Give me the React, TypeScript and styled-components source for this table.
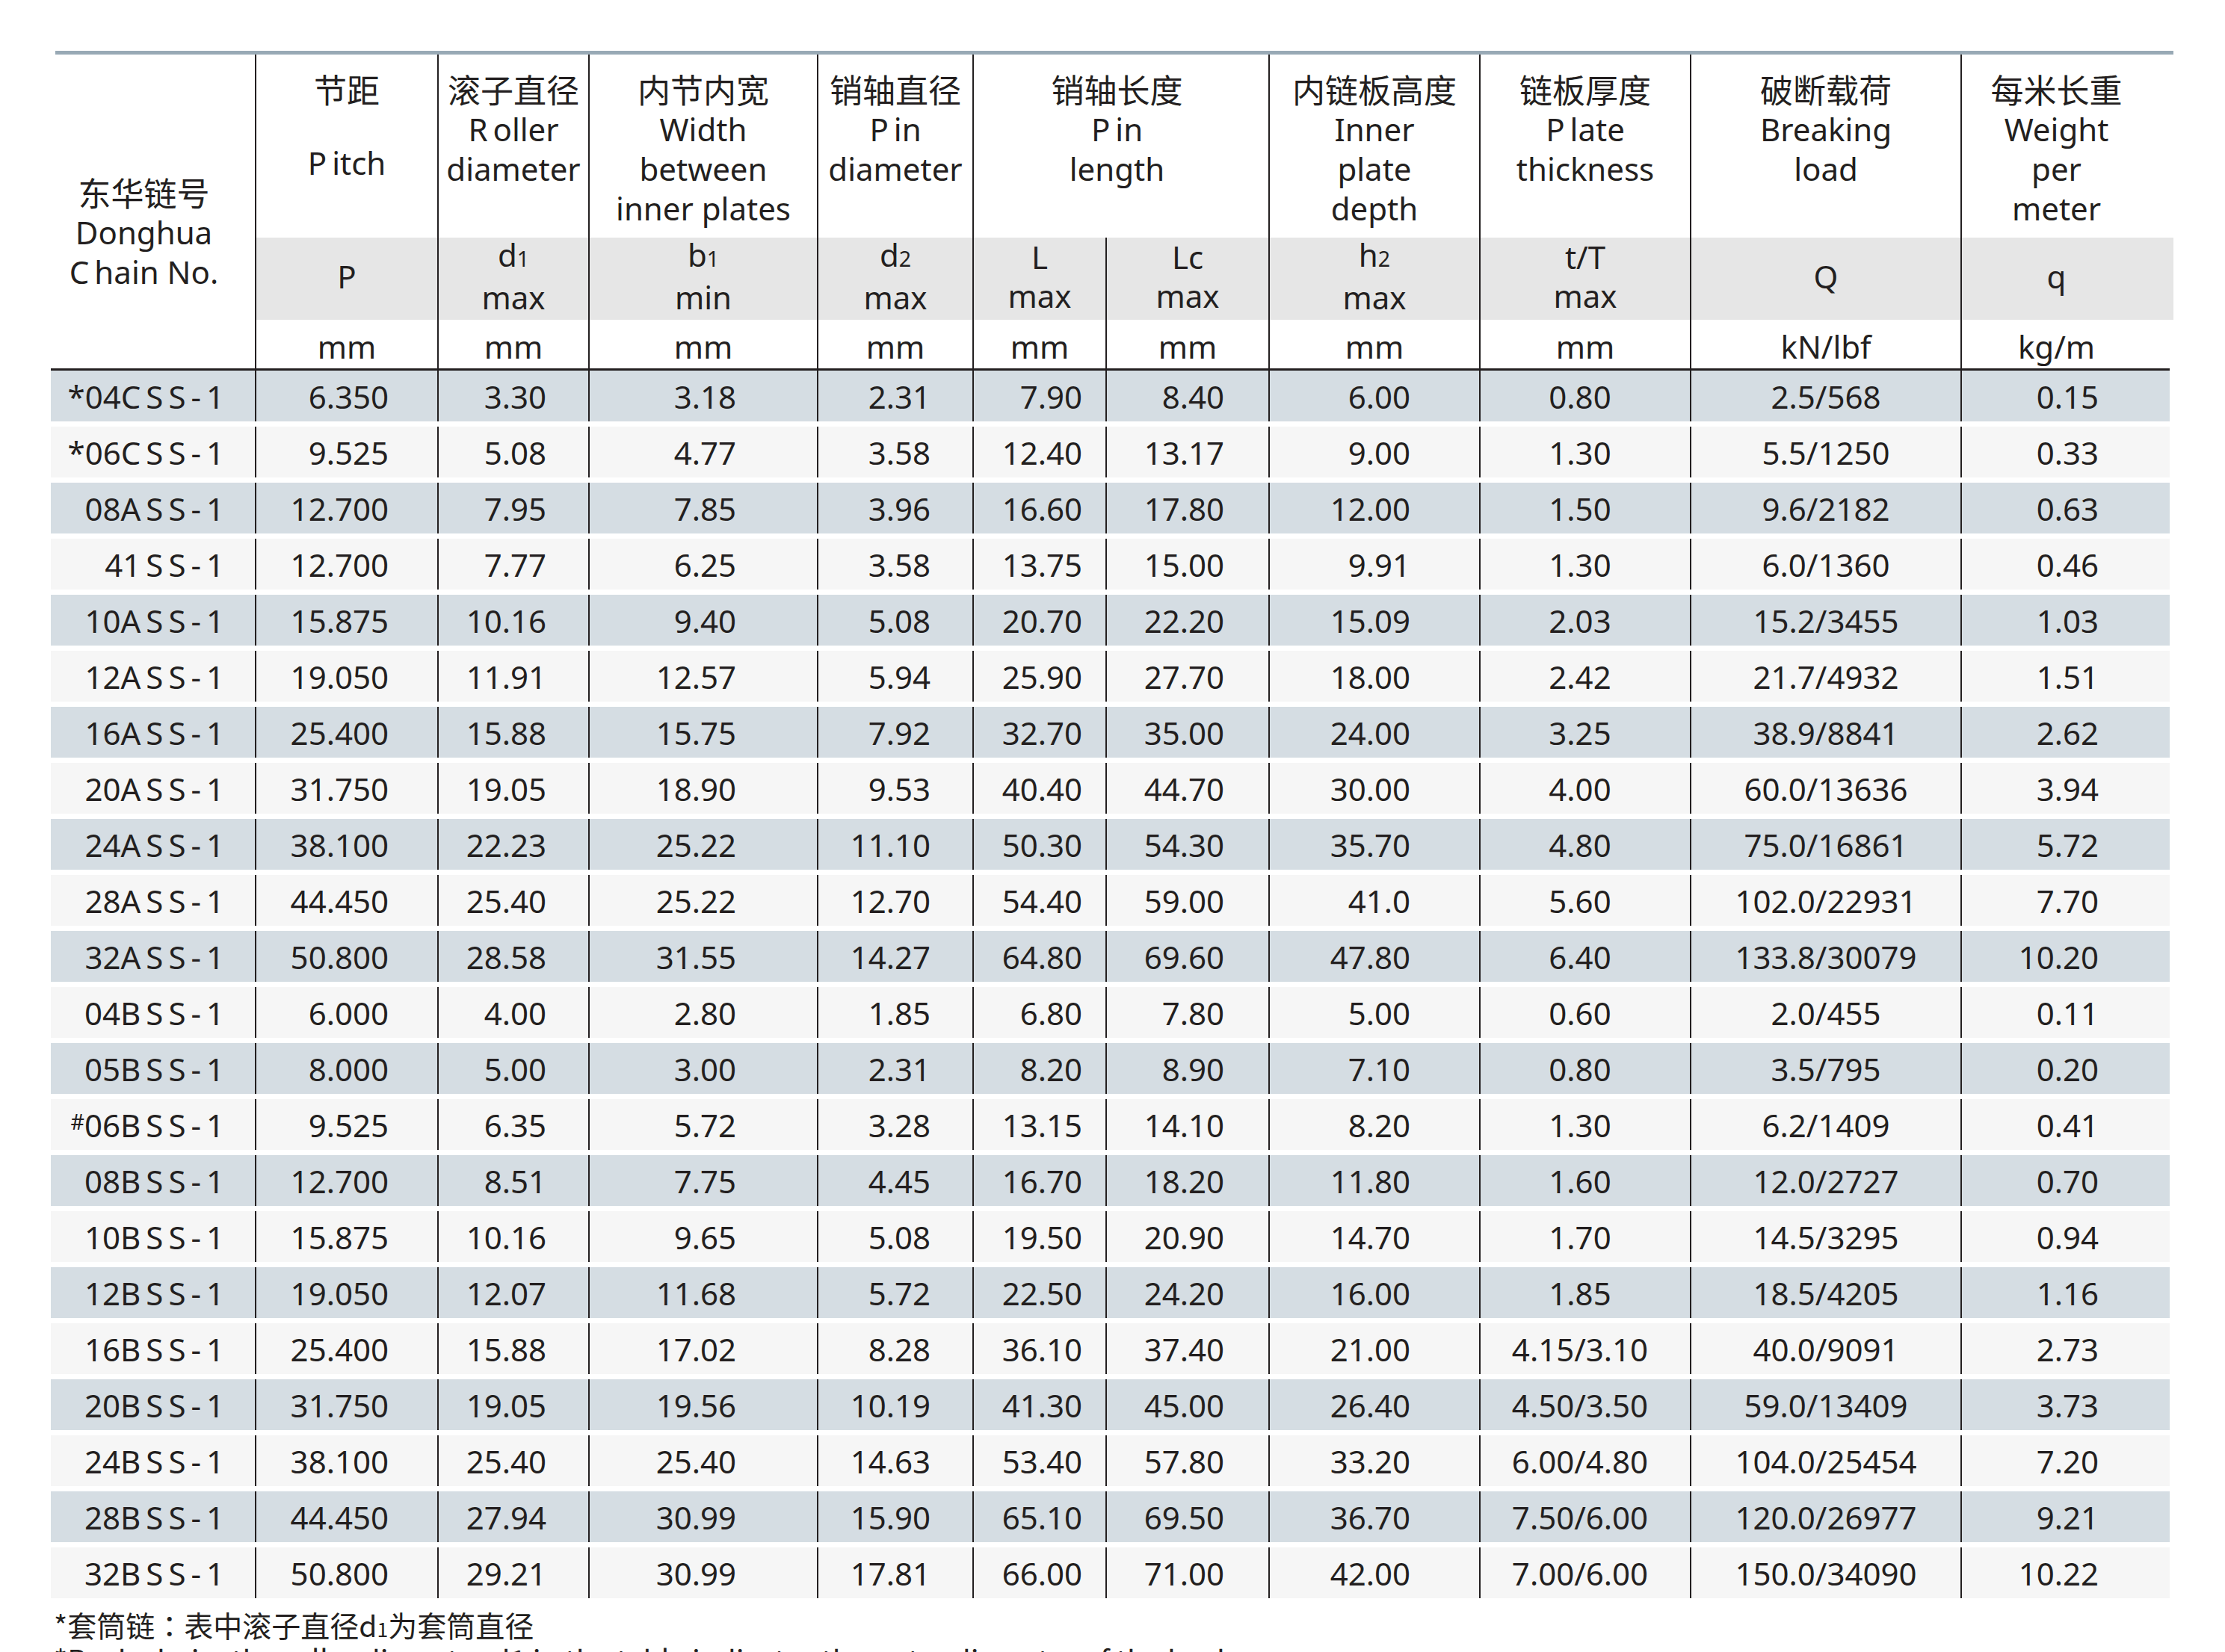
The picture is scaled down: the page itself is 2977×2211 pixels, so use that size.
import React from 'react';
import styled, { createGlobalStyle } from 'styled-components';

const GlobalStyle = createGlobalStyle`
  html, body {
    margin: 0;
    padding: 0;
    background: #fff;
    overflow: hidden;
  }
  body {
    font-family: "Noto Sans", "Noto Sans CJK SC", sans-serif;
    color: #231f20;
  }
`;

const BODY_COLS = '273px 244px 202px 306px 208px 178px 218px 282px 282px 362px 280px';
const HEAD_COLS = '273px 244px 202px 306px 208px 178px 218px 282px 282px 362px 285px';

const Page = styled.div`
  padding: 68px 0 0 68px;
  width: 2909px;
`;

const TopRule = styled.div`
  height: 5px;
  margin-left: 6px;
  width: 2834px;
  background: #98a9b5;
`;

const HeadGrid = styled.div`
  display: grid;
  grid-template-columns: ${HEAD_COLS};
  grid-template-rows: 245px 110px 65px;
  font-size: 42px;
  line-height: 53px;

  & > :nth-child(10),
  & > :nth-child(20),
  & > :nth-child(30) {
    padding-right: 30px;
  }
`;

const ChainHead = styled.div`
  grid-column: 1;
  grid-row: 1 / 4;
  padding: 158px 24px 0 0;
  text-align: center;
  line-height: 53px;
`;

const TitleCell = styled.div<{ $span?: number; $shift?: number }>`
  grid-column: span ${(p) => p.$span ?? 1};
  border-left: 2px solid #231f20;
  padding-top: 20px;
  padding-right: ${(p) => p.$shift ?? 0}px;
  text-align: center;
`;

const Zh = styled.div`
  font-family: "Noto Sans CJK SC", sans-serif;
  font-size: 44px;
`;

const Line = styled.div<{ $drop?: number }>`
  margin-top: ${(p) => p.$drop ?? 0}px;
  white-space: nowrap;
`;

const Lead = styled.span`
  margin-right: 7px;
`;

const SymbolCell = styled.div`
  border-left: 2px solid #231f20;
  background: #e6e6e6;
  display: flex;
  flex-direction: column;
  justify-content: center;
  align-items: center;
  line-height: 52px;
  padding-bottom: 7px;
`;

const UnitCell = styled.div`
  border-left: 2px solid #231f20;
  padding-top: 9px;
  text-align: center;
`;

const Sub = styled.span`
  font-size: 0.68em;
`;

const Sup = styled.span`
  font-size: 0.68em;
  vertical-align: 0.35em;
`;

const BlackRule = styled.div`
  height: 3px;
  width: 2835px;
  background: #231f20;
`;

const Row = styled.div<{ $bg: string }>`
  display: grid;
  grid-template-columns: ${BODY_COLS};
  height: 75px;
  width: 2835px;
  background: linear-gradient(to bottom, ${(p) => p.$bg} 0, ${(p) => p.$bg} 68px, #fff 68px);
  font-size: 42px;

  &:last-child {
    height: 72px;
  }
`;

const Cell = styled.div<{ $align: 'right' | 'center'; $pad: number; $first?: boolean }>`
  border-left: ${(p) => (p.$first ? 'none' : '2px solid #231f20')};
  height: 68px;
  display: flex;
  align-items: center;
  justify-content: ${(p) => (p.$align === 'right' ? 'flex-end' : 'center')};
  padding-right: ${(p) => p.$pad}px;
  box-sizing: border-box;
  white-space: nowrap;
`;

const Spaced = styled.span`
  margin-left: 7px;
  letter-spacing: 7px;
`;

const Notes = styled.div`
  margin: 11px 0 0 4px;
  font-family: "Noto Sans CJK SC", sans-serif;
  font-size: 39px;
  line-height: 40px;
  white-space: nowrap;
`;

const Colon = styled.span`
  font-family: "Noto Sans CJK TC", sans-serif;
`;

type ColAlign = { align: 'right' | 'center'; pad: number };

const DATA_ALIGN: ColAlign[] = [
  { align: 'right', pad: 41 },
  { align: 'right', pad: 65 },
  { align: 'right', pad: 56 },
  { align: 'right', pad: 108 },
  { align: 'right', pad: 56 },
  { align: 'right', pad: 31 },
  { align: 'right', pad: 59 },
  { align: 'right', pad: 92 },
  { align: 'center', pad: 14 },
  { align: 'center', pad: 0 },
  { align: 'right', pad: 95 },
];

type Title = { zh: string; en: string[]; lead?: boolean[]; span?: number; drop?: number; shift?: number };

const TITLES: Title[] = [
  { zh: '节距', en: ['Pitch'], lead: [true], drop: 45 },
  { zh: '滚子直径', en: ['Roller', 'diameter'], lead: [true] },
  { zh: '内节内宽', en: ['Width', 'between', 'inner plates'] },
  { zh: '销轴直径', en: ['Pin', 'diameter'], lead: [true] },
  { zh: '销轴长度', en: ['Pin', 'length'], lead: [true], span: 2, shift: 11 },
  { zh: '内链板高度', en: ['Inner', 'plate', 'depth'] },
  { zh: '链板厚度', en: ['Plate', 'thickness'], lead: [true] },
  { zh: '破断载荷', en: ['Breaking', 'load'] },
  { zh: '每米长重', en: ['Weight', 'per', 'meter'] },
];

const SYMBOLS: React.ReactNode[][] = [
  ['P'],
  [<>d<Sub>1</Sub></>, 'max'],
  [<>b<Sub>1</Sub></>, 'min'],
  [<>d<Sub>2</Sub></>, 'max'],
  ['L', 'max'],
  ['Lc', 'max'],
  [<>h<Sub>2</Sub></>, 'max'],
  ['t/T', 'max'],
  ['Q'],
  ['q'],
];

const UNITS = ['mm', 'mm', 'mm', 'mm', 'mm', 'mm', 'mm', 'mm', 'kN/lbf', 'kg/m'];

const ROWS: string[][] = [
  ['*04C', '6.350', '3.30', '3.18', '2.31', '7.90', '8.40', '6.00', '0.80', '2.5/568', '0.15'],
  ['*06C', '9.525', '5.08', '4.77', '3.58', '12.40', '13.17', '9.00', '1.30', '5.5/1250', '0.33'],
  ['08A', '12.700', '7.95', '7.85', '3.96', '16.60', '17.80', '12.00', '1.50', '9.6/2182', '0.63'],
  ['41', '12.700', '7.77', '6.25', '3.58', '13.75', '15.00', '9.91', '1.30', '6.0/1360', '0.46'],
  ['10A', '15.875', '10.16', '9.40', '5.08', '20.70', '22.20', '15.09', '2.03', '15.2/3455', '1.03'],
  ['12A', '19.050', '11.91', '12.57', '5.94', '25.90', '27.70', '18.00', '2.42', '21.7/4932', '1.51'],
  ['16A', '25.400', '15.88', '15.75', '7.92', '32.70', '35.00', '24.00', '3.25', '38.9/8841', '2.62'],
  ['20A', '31.750', '19.05', '18.90', '9.53', '40.40', '44.70', '30.00', '4.00', '60.0/13636', '3.94'],
  ['24A', '38.100', '22.23', '25.22', '11.10', '50.30', '54.30', '35.70', '4.80', '75.0/16861', '5.72'],
  ['28A', '44.450', '25.40', '25.22', '12.70', '54.40', '59.00', '41.0', '5.60', '102.0/22931', '7.70'],
  ['32A', '50.800', '28.58', '31.55', '14.27', '64.80', '69.60', '47.80', '6.40', '133.8/30079', '10.20'],
  ['04B', '6.000', '4.00', '2.80', '1.85', '6.80', '7.80', '5.00', '0.60', '2.0/455', '0.11'],
  ['05B', '8.000', '5.00', '3.00', '2.31', '8.20', '8.90', '7.10', '0.80', '3.5/795', '0.20'],
  ['#06B', '9.525', '6.35', '5.72', '3.28', '13.15', '14.10', '8.20', '1.30', '6.2/1409', '0.41'],
  ['08B', '12.700', '8.51', '7.75', '4.45', '16.70', '18.20', '11.80', '1.60', '12.0/2727', '0.70'],
  ['10B', '15.875', '10.16', '9.65', '5.08', '19.50', '20.90', '14.70', '1.70', '14.5/3295', '0.94'],
  ['12B', '19.050', '12.07', '11.68', '5.72', '22.50', '24.20', '16.00', '1.85', '18.5/4205', '1.16'],
  ['16B', '25.400', '15.88', '17.02', '8.28', '36.10', '37.40', '21.00', '4.15/3.10', '40.0/9091', '2.73'],
  ['20B', '31.750', '19.05', '19.56', '10.19', '41.30', '45.00', '26.40', '4.50/3.50', '59.0/13409', '3.73'],
  ['24B', '38.100', '25.40', '25.40', '14.63', '53.40', '57.80', '33.20', '6.00/4.80', '104.0/25454', '7.20'],
  ['28B', '44.450', '27.94', '30.99', '15.90', '65.10', '69.50', '36.70', '7.50/6.00', '120.0/26977', '9.21'],
  ['32B', '50.800', '29.21', '30.99', '17.81', '66.00', '71.00', '42.00', '7.00/6.00', '150.0/34090', '10.22'],
];

const Word = ({ text, lead }: { text: string; lead?: boolean }) =>
  lead ? (
    <>
      <Lead>{text[0]}</Lead>
      {text.slice(1)}
    </>
  ) : (
    <>{text}</>
  );

const ChainCode = ({ base }: { base: string }) => {
  const mark = base[0] === '#' ? '#' : '';
  const rest = mark ? base.slice(1) : base;
  return (
    <span>
      {mark && <Sup>{mark}</Sup>}
      {rest}
      <Spaced>SS-</Spaced>1
    </span>
  );
};

const App = () => (
  <Page>
    <GlobalStyle />
    <TopRule />
    <HeadGrid>
      <ChainHead>
        <Zh>东华链号</Zh>
        <Line>Donghua</Line>
        <Line>
          <Word text="Chain No." lead />
        </Line>
      </ChainHead>
      {TITLES.map((t) => (
        <TitleCell key={t.zh} $span={t.span} $shift={t.shift}>
          <Zh>{t.zh}</Zh>
          {t.en.map((w, i) => (
            <Line key={w} $drop={i === 0 ? t.drop : 0}>
              <Word text={w} lead={t.lead?.[i]} />
            </Line>
          ))}
        </TitleCell>
      ))}
      {SYMBOLS.map((lines, c) => (
        <SymbolCell key={c}>
          {lines.map((l, i) => (
            <div key={i}>{l}</div>
          ))}
        </SymbolCell>
      ))}
      {UNITS.map((u, c) => (
        <UnitCell key={c}>{u}</UnitCell>
      ))}
    </HeadGrid>
    <BlackRule />
    <div>
      {ROWS.map((r, ri) => (
        <Row key={r[0]} $bg={ri % 2 === 0 ? '#d5dde3' : '#f6f6f6'}>
          {r.map((v, ci) => (
            <Cell key={ci} $align={DATA_ALIGN[ci].align} $pad={DATA_ALIGN[ci].pad} $first={ci === 0}>
              {ci === 0 ? <ChainCode base={v} /> : v}
            </Cell>
          ))}
        </Row>
      ))}
    </div>
    <Notes>
      <div>
        *套筒链<Colon>：</Colon>表中滚子直径d<Sub>1</Sub>为套筒直径
      </div>
      <div>*Bush chain: the roller diameter d1 in the table indicates the outer diameter of the bush</div>
    </Notes>
  </Page>
);

export default App;
